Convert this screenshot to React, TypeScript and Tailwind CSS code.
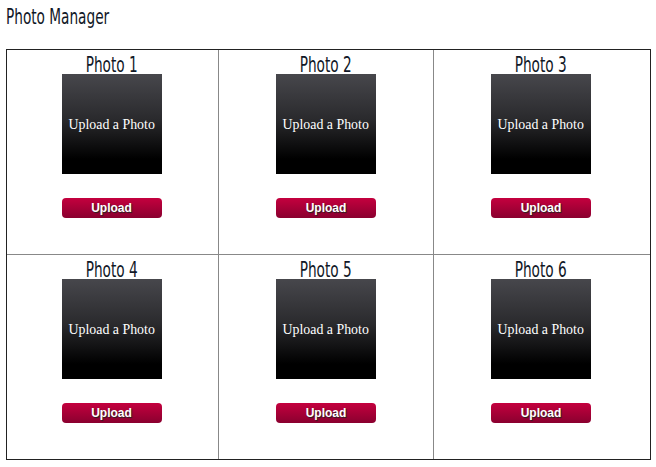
import React from "react";

const cond = { fontFamily: '"DejaVu Sans", sans-serif' };

function Cell({ n, border }: { n: number; border: string }) {
  return (
    <div className={`flex flex-col items-center ${border}`}>
      <div
        className="h-[24px] text-[22px] leading-[30px] text-[#111827] [font-stretch:condensed] scale-x-[0.69]"
        style={cond}
      >
        Photo {n}
      </div>
      <div className="w-[100px] h-[100px] flex items-center justify-center bg-[linear-gradient(to_bottom,#47474c_0%,#2a2a2d_45%,#000_85%)]">
        <span
          className="text-white text-[15px] whitespace-nowrap scale-x-[0.925]"
          style={{ fontFamily: '"Liberation Serif", serif' }}
        >
          Upload a Photo
        </span>
      </div>
      <button
        className="mt-[24px] w-[100px] h-[20px] rounded-[4px] bg-[linear-gradient(to_bottom,#c4003e,#8a002f)] text-white font-bold text-[12px] leading-[20px] [text-shadow:1px_1px_1px_#222]"
        style={{ fontFamily: '"Liberation Sans", Arial, sans-serif' }}
      >
        Upload
      </button>
    </div>
  );
}

export default function App() {
  return (
    <div className="w-[656px] h-[467px] bg-white">
      <div className="pl-[6px] pt-[5px] h-[49px]">
        <div
          className="text-[22px] leading-[24px] text-[#111827] [font-stretch:condensed] scale-x-[0.69] origin-left"
          style={cond}
        >
          Photo Manager
        </div>
      </div>
      <div className="ml-[6px] w-[645px] border border-[#222] grid grid-cols-[212px_215px_216px] grid-rows-[205px_204px]">
        <Cell n={1} border="pr-[2px] border-r border-b border-[#888]" />
        <Cell n={2} border="border-r border-b border-[#888]" />
        <Cell n={3} border="pr-[2px] border-b border-[#888]" />
        <Cell n={4} border="pr-[2px] border-r border-[#888]" />
        <Cell n={5} border="border-r border-[#888]" />
        <Cell n={6} border="pr-[2px]" />
      </div>
    </div>
  );
}
